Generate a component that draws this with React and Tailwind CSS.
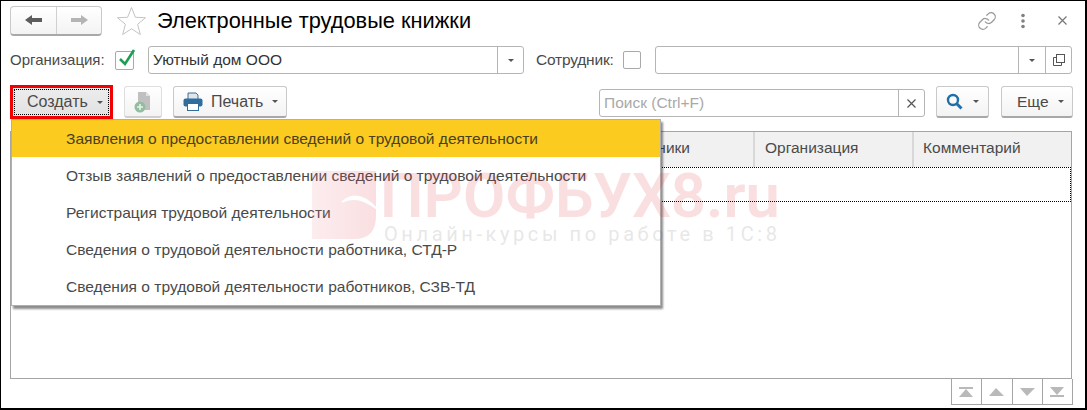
import React from "react";

const Caret = ({ className = "" }) => (
  <span className={"inline-block w-0 h-0 border-x-[3px] border-x-transparent border-t-[3px] border-t-[#555] " + className} />
);

const Btn = ({ className = "", children }) => (
  <div className={"h-[32px] flex items-center rounded-[3px] border border-[#c9c9c9] border-b-[#a8a8a8] border-b-2 bg-gradient-to-b from-white to-[#f3f3f3] text-[#4a4a4a] " + className}>
    {children}
  </div>
);

const items = [
  "Заявления о предоставлении сведений о трудовой деятельности",
  "Отзыв заявлений о предоставлении сведений о трудовой деятельности",
  "Регистрация трудовой деятельности",
  "Сведения о трудовой деятельности работника, СТД-Р",
  "Сведения о трудовой деятельности работников, СЗВ-ТД",
];

export default function App() {
  return (
    <div className="relative w-[1087px] h-[410px] bg-white border-l border-t border-r-2 border-b-2 border-black overflow-hidden font-['Liberation_Sans',Arial,sans-serif] text-[15.5px] text-[#4a4a4a]">
      {/* Title row */}
      <div className="flex items-center h-[31px] mt-[4px] pl-[9px] pr-[18px]">
        <div className="flex w-[92px] h-[30px] rounded-[4px] border border-[#c9c9c9] border-b-2 border-b-[#a8a8a8] bg-gradient-to-b from-white to-[#f3f3f3]">
          <div className="w-[46px] flex items-center justify-center border-r border-[#d0d0d0]">
            <svg width="17" height="10" viewBox="0 0 17 10"><path d="M0 5 L7 0 V3 H17 V7 H7 V10 Z" fill="#5c5c5c" /></svg>
          </div>
          <div className="flex-1 flex items-center justify-center">
            <svg width="17" height="10" viewBox="0 0 17 10"><path d="M17 5 L10 0 V3 H0 V7 H10 V10 Z" fill="#b4b4b4" /></svg>
          </div>
        </div>
        <svg className="ml-[14px]" width="31" height="30" viewBox="0 0 31 30"><path d="M15.5 1.5 L19.4 11.3 L29.5 11.7 L21.6 18.3 L24.3 28.5 L15.5 22.8 L6.7 28.5 L9.4 18.3 L1.5 11.7 L11.6 11.3 Z" fill="none" stroke="#c4c4c4" strokeWidth="1" /></svg>
        <div className="ml-[10px] text-[21.8px] leading-[30px] text-black">Электронные трудовые книжки</div>
        <div className="ml-auto flex items-center">
          <svg width="20" height="22" viewBox="0 0 24 24" fill="none" stroke="#9a9a9a" strokeWidth="1.5" strokeLinecap="round" strokeLinejoin="round"><path d="M10 13a5 5 0 0 0 7.54.54l3-3a5 5 0 0 0-7.07-7.07l-1.72 1.71" /><path d="M14 11a5 5 0 0 0-7.54-.54l-3 3a5 5 0 0 0 7.07 7.07l1.71-1.71" /></svg>
          <svg className="ml-[23px]" width="6" height="16" viewBox="0 0 6 16"><circle cx="3" cy="2.5" r="1.8" fill="#808080" /><circle cx="3" cy="8" r="1.8" fill="#808080" /><circle cx="3" cy="13.5" r="1.8" fill="#808080" /></svg>
          <svg className="ml-[32px]" width="9" height="9" viewBox="0 0 9 9"><path d="M0.5 0.5 L8.5 8.5 M8.5 0.5 L0.5 8.5" stroke="#777" strokeWidth="1.2" /></svg>
        </div>
      </div>

      {/* Filter row */}
      <div className="flex items-center h-[28px] mt-[10px] pl-[9px]">
        <span className="w-[105px] text-[15px]">Организация:</span>
        <span className="relative w-[19px] h-[19px] border border-[#a9a9a9] rounded-[2px] bg-white">
          <svg className="absolute left-[2px] -top-[4px]" width="18" height="20" viewBox="0 0 18 20"><path d="M2 11 L7 16 L16 2" fill="none" stroke="#1f9d55" strokeWidth="2.6" /></svg>
        </span>
        <div className="ml-[14px] flex w-[376px] h-[28px] rounded-[3px] border border-[#b5b5b5] bg-white">
          <div className="flex-1 pl-[4px] leading-[26px] text-[#333]">Уютный дом ООО</div>
          <div className="w-[26px] flex items-center justify-center border-l border-[#b5b5b5]"><Caret /></div>
        </div>
        <span className="ml-[12px] w-[87px] tracking-[-0.2px]">Сотрудник:</span>
        <span className="w-[18px] h-[18px] border border-[#a9a9a9] rounded-[2px] bg-white" />
        <div className="ml-[14px] flex w-[417px] h-[28px] rounded-[3px] border border-[#b5b5b5] bg-white">
          <div className="flex-1" />
          <div className="w-[27px] flex items-center justify-center border-l border-[#b5b5b5]"><Caret /></div>
          <div className="w-[26px] flex items-center justify-center border-l border-[#b5b5b5]">
            <svg width="12" height="12" viewBox="0 0 12 12" fill="none" stroke="#555"><rect x="3.5" y="0.5" width="8" height="8" /><path d="M3 3.5 H0.5 V11.5 H8.5 V9" /></svg>
          </div>
        </div>
      </div>

      {/* Command row */}
      <div className="flex items-center h-[34px] mt-[11px] pl-[9px]">
        <div className="w-[103px] h-[34px] border-[3px] border-[#f00000] bg-[#e8e8e8] p-[1px]">
          <div className="h-full border border-dotted border-black flex items-center pl-[12px] text-[16px] text-[#4a4a4a] bg-gradient-to-b from-[#ececec] to-[#e2e2e2]">
            Создать<Caret className="ml-[9px]" />
          </div>
        </div>
        <Btn className="ml-[11px] w-[38px] justify-center border-[#dedede] border-b-[#cfcfcf]">
          <svg width="20" height="22" viewBox="0 0 20 22"><path d="M5 1 H13 L17 5 V19 H5 Z" fill="#c0c0c0" /><path d="M13 1 L17 5 H13 Z" fill="#e2e2e2" /><circle cx="7" cy="16" r="5.5" fill="#93bd9e" /><path d="M4 16 H10 M7 13 V19" stroke="#e8f2ea" strokeWidth="1.6" /></svg>
        </Btn>
        <Btn className="ml-[11px] w-[114px] pl-[9px] text-[16px]">
          <svg width="20" height="19" viewBox="0 0 20 19"><path d="M5 1 H13 L15 3 V8 H5 Z" fill="#dfe6ec" stroke="#3e6f96" /><rect x="0.5" y="6.5" width="19" height="8" rx="2" fill="#2f6d9e" /><rect x="4.5" y="11.5" width="11" height="7" fill="#fff" stroke="#2f6d9e" /></svg>
          <span className="ml-[8px]">Печать</span><Caret className="ml-[9px]" />
        </Btn>
        <div className="ml-[312px] flex w-[326px] h-[28px] mt-[2px] rounded-[3px] border border-[#b5b5b5] bg-white">
          <div className="flex-1 pl-[4px] leading-[26px] text-[#a9a9a9]">Поиск (Ctrl+F)</div>
          <div className="w-[26px] flex items-center justify-center border-l border-[#b5b5b5]">
            <svg width="9" height="9" viewBox="0 0 9 9"><path d="M0.5 0.5 L8.5 8.5 M8.5 0.5 L0.5 8.5" stroke="#555" strokeWidth="1.2" /></svg>
          </div>
        </div>
        <Btn className="ml-[11px] w-[53px] pl-[9px]">
          <svg width="17" height="17" viewBox="0 0 17 17" fill="none" stroke="#1f6fa8" strokeWidth="2.4"><circle cx="7" cy="7" r="5" /><path d="M10.5 10.5 L15.5 15.5" strokeWidth="3" /></svg>
          <Caret className="ml-[10px]" />
        </Btn>
        <Btn className="ml-[12px] w-[72px] pl-[15px]">
          Еще<Caret className="ml-[9px]" />
        </Btn>
      </div>

      {/* Table */}
      <div className="mt-[12px] ml-[9px] w-[1062px] h-[248px] border border-[#a5a5a5] flex flex-col">
        <div className="h-[35px] bg-[#f1f1f1] flex leading-[32px]">
          <div className="w-[742px] text-right pr-[63px]">Сотрудники</div>
          <div className="w-[159px] border-l-2 border-[#d8d8d8] pl-[10px]">Организация</div>
          <div className="flex-1 border-l-2 border-[#d8d8d8] pl-[9px]">Комментарий</div>
        </div>
        <div className="h-[35px] border border-dotted border-black" />
      </div>

      {/* Pager */}
      <div className="ml-[950px] w-[122px] h-[26px] flex border border-t-0 border-[#a5a5a5]">
        {[
          <path key="a" d="M0 0 H14 V2 H0 Z M7 2 L14 10 H0 Z" />,
          <path key="b" d="M7 1 L15 9 H0 Z" />,
          <path key="c" d="M0 1 H15 L7 9 Z" />,
          <path key="d" d="M0 0 H14 L7 8 Z M0 8 H14 V10 H0 Z" />,
        ].map((p, i) => (
          <div key={i} className={"flex-1 flex items-center justify-center " + (i ? "border-l border-[#a5a5a5]" : "")}>
            <svg width="15" height="10" viewBox="0 0 15 10" fill="#b9b9b9">{p}</svg>
          </div>
        ))}
      </div>

      {/* Dropdown menu */}
      <div className="absolute left-[10px] top-[118px] w-[650px] h-[187px] bg-white border border-[#b0b0b0] shadow-[2px_3px_2px_rgba(0,0,0,0.45)] flex flex-col z-10 text-[15.55px]">
        {items.map((t, i) => (
          <div key={i} className={"h-[37px] pl-[54px] leading-[38px] whitespace-nowrap " + (i === 0 ? "bg-[#fbcc1f] text-[#4a4020]" : "")}>
            {t}
          </div>
        ))}
      </div>

      {/* Watermark */}
      <div className="absolute left-[311px] top-[170px] z-20 flex opacity-[0.15] pointer-events-none">
        <svg width="66" height="68" viewBox="0 0 66 68">
          <defs>
            <linearGradient id="wm" x1="0" x2="1" y1="0" y2="0"><stop offset="0" stopColor="#f08a96" /><stop offset="1" stopColor="#e0303f" /></linearGradient>
          </defs>
          <path d="M0 0 H64 V45 Q64 68 42 68 H0 Z" fill="url(#wm)" />
          <path d="M30 31 Q46 17 65 38 Q46 23 30 31 Z" fill="#fff" stroke="#fff" strokeWidth="1.5" />
        </svg>
        <div className="ml-[2px] flex flex-col font-['Roboto',sans-serif]">
          <div className="text-[61.5px] leading-[50px] font-semibold text-[#e0303f] whitespace-nowrap">ПРОФБУХ8.ru</div>
          <div className="mt-[3px] ml-[4px] text-[20px] leading-[20px] tracking-[3.6px] text-[#666] whitespace-nowrap">Онлайн-курсы по работе в 1С:8</div>
        </div>
      </div>
    </div>
  );
}
